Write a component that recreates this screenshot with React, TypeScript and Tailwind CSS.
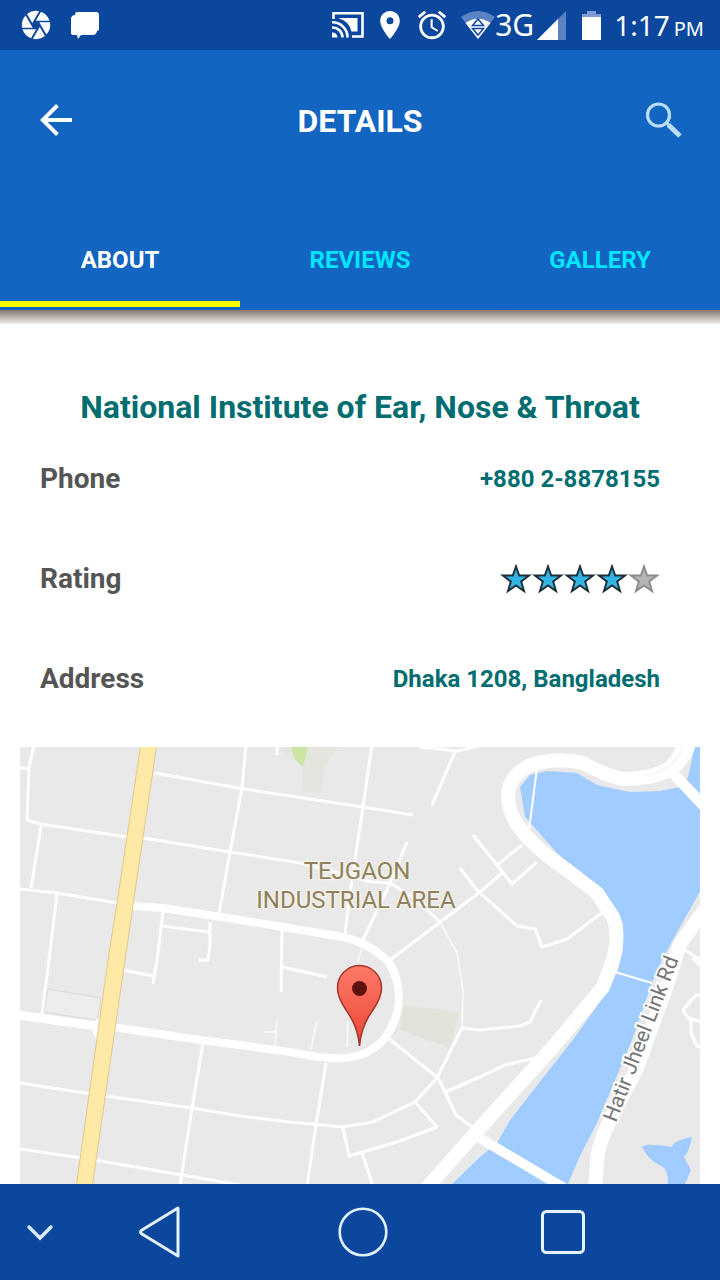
import { useState } from "react";
import { MdAlarm, MdArrowBack, MdCamera } from "react-icons/md";

const TABS = ["ABOUT", "REVIEWS", "GALLERY"];

const MINOR_ROADS = [
  "M34 745L29 767L27 820L40 824L127 837L143 838L230 852L300 863L372 882L390 883L413 897L440 922",
  "M20 768H29",
  "M41 826L31 888",
  "M20 889L57 893L117 903",
  "M57 894L49 960L42 1014",
  "M155 773L238 788L363 807L413 815",
  "M246 745L242 788L230 852L219 914",
  "M372 745L363 807L355 860L350 893L345 934",
  "M277 745V755",
  "M163 912L157 960L153 984",
  "M123 970L153 976",
  "M162 926L209 932M210 922V945L208 960H199",
  "M282 930L281 992M282 967L327 977",
  "M20 1083L105 1096L192 1108L240 1116L290 1122L343 1127L373 1122L415 1102L437 1078L462 1028L480 1030L520 1026L530 1022L541 1000",
  "M20 1149L95 1160L240 1185",
  "M203 1043L192 1108L180 1186",
  "M326 1063L316 1125L307 1186",
  "M388 1038L438 1078L445 1092L456 1115L475 1129",
  "M445 1092L480 1077L505 1065L536 1058",
  "M415 1102L437 1127L400 1141L349 1156L343 1128",
  "M362 1153L373 1186",
  "M407 842L387 890L363 940",
  "M390 960L480 892L502 873",
  "M460 868L477 890L517 926L535 929L542 947L567 939L603 912",
  "M473 835L497 865L512 884L537 862M497 865L522 845",
  "M455 752L432 805M420 747L458 751L482 745",
  "M682 948L702 961M702 995L696 995L683 1010L688 1018L702 1022M691 1020V1033L697 1046L702 1047",
];

const FAINT_ROADS = [
  "M440 922L457 953L463 990L462 1028",
  "M277 1020L275 1047M263 1032H277",
  "M317 1021L311 1050",
  "M348 1021L347 1047",
  "M362 947L358 962",
];

function StreetMap() {
  return (
    <svg
      viewBox="20 747 680 437"
      preserveAspectRatio="xMidYMin slice"
      className="block min-h-[437px] w-full flex-1"
      role="img"
      aria-label="Map of Tejgaon Industrial Area"
    >
      <defs>
        <linearGradient id="pin" x1="0" y1="0" x2="0" y2="1">
          <stop offset="0" stopColor="#ff7a68" />
          <stop offset="1" stopColor="#ea4535" />
        </linearGradient>
      </defs>
      <rect x="20" y="747" width="680" height="900" fill="#e9e9e9" />

      <path d="M278 747H338L325 765L322 792H303L302 767L290 757Z" fill="#e4e5de" />
      <path d="M291 747H308L303 767L295 759Z" fill="#cbe6a3" />
      <path d="M403 1005L460 1012L450 1048L400 1030Z" fill="#e3e3dc" />
      <path d="M48 989L101 998L98 1017L95 1020L44 1012Z" fill="#ededed" stroke="#dadada" />

      <g fill="#a1ccff">
        <path d="M520 787L530 775L547 771L577 773L597 785L630 792L660 791L680 787L688 777L695 745H702V888L680 927L662 960L652 983L632 1040L597 1123L580 1156L567 1186H450L480 1157L497 1143L510 1120L575 1037L607 992L618 970L623 950V923L603 893L557 853L525 817Z" />
        <path d="M642 1147C648 1143 654 1146 660 1145L672 1147Q674 1140 692 1137Q690 1150 684 1157L691 1170L684 1186H668Q668 1170 663 1167Q648 1160 642 1147Z" />
      </g>

      <g fill="none" stroke="#fff" strokeLinejoin="round">
        <g strokeWidth="2">
          <path d="M537 768L529 830M615 972L652 983" />
          {FAINT_ROADS.map((d) => (
            <path key={d} d={d} opacity="0.65" />
          ))}
        </g>
        <g strokeWidth="3">
          {MINOR_ROADS.map((d) => (
            <path key={d} d={d} />
          ))}
        </g>
        <g strokeWidth="9">
          <path
            d="M132 906L163 908L240 920L283 927L343 937Q367 942 387 960Q399 976 399 998Q399 1018 385 1038Q370 1056 345 1058Q330 1060 290 1052L240 1045L200 1040L112 1027"
            strokeWidth="8"
          />
          <path d="M18 1015L53 1020L105 1027" />
          <path d="M478 1137L564 1188" strokeWidth="10" />
          <path d="M668 768L704 806" strokeWidth="11" />
        </g>
        <path
          d="M686 741Q680 760 667 770Q650 779 623 779Q606 776 583 763Q560 757 533 764Q508 775 508 797Q508 819 533 843Q545 855 567 870L597 893L613 917Q620 935 613 960L603 987L553 1047L487 1120L425 1190"
          strokeWidth="14"
        />
        <path d="M692 742Q686 764 668 773Q652 783 618 780" strokeWidth="9" />
        <path d="M706 908L680 944L667 985L637 1068L610 1120Q598 1145 597 1160L595 1190" strokeWidth="14" />
      </g>
      <path d="M683 747Q679 760 669 766Q660 773 646 776M677 755L673 764" fill="none" stroke="#f1eeee" />
      <path d="M90 1026L97 1041L103 1014L96 1020Z" fill="#fff" />
      <path d="M141 743L117 903L108 960L76 1188H92L125 960L133 905L157 743Z" fill="#ffe9a6" stroke="#dfc98a" />
      <path d="M690 958L702 969V958Z" fill="#fff" />

      <g
        fill="#8f825c"
        stroke="#f3f1ea"
        strokeWidth="3"
        paintOrder="stroke"
        textAnchor="middle"
        className="font-['Roboto',sans-serif] text-[24px]"
      >
        <text x="357" y="879">TEJGAON</text>
        <text x="356" y="908">INDUSTRIAL AREA</text>
      </g>
      <text
        transform="translate(616 1123) rotate(-69)"
        fill="#757575"
        stroke="#fff"
        strokeWidth="4"
        paintOrder="stroke"
        className="font-['Roboto',sans-serif] text-[21px]"
      >
        Hatir Jheel Link Rd
      </text>

      <path
        d="M359.500 1046C358.500 1035 355 1024 350 1016C344 1007 337.500 998 337.500 987.500A22 22 0 0 1 381.500 987.500C381.500 998 375 1007 369 1016C364 1024 360.500 1035 359.500 1046Z"
        fill="url(#pin)"
        stroke="#a5352a"
        strokeWidth="1.500"
      />
      <circle cx="359.500" cy="988.500" r="7.500" fill="#5c110c" />
    </svg>
  );
}

function StatusBar() {
  return (
    <div className="flex h-[50px] items-center bg-[#0b479d] pr-4 pl-[19px] font-['Noto_Sans',sans-serif] font-normal text-white">
      <MdCamera size={34} />
      <svg width="28" height="28" viewBox="0 0 28 28" className="ml-[18px]" fill="#fff" aria-hidden="true">
        <path d="M6 1H25Q28 1 28 4V18Q28 20 26 20Q25 24 22 24H10L7 28L6 24H3Q0 24 0 22V7Q1 4 4 4Q4 1 6 1Z" />
      </svg>
      <div className="ml-auto flex items-center">
        <svg width="32" height="28" viewBox="0 0 32 28" fill="none" stroke="#fff" strokeWidth="2.600" aria-hidden="true">
          <path d="M1.500 8V2.300H30.500V25.500H20" />
          <path d="M7 7H25.500V20.500H19.500Q17 10 7 7.500Z" fill="#fff" stroke="none" />
          <path d="M0 11.300A15 15 0 0 1 15.500 26.500M0 16.500A10 10 0 0 1 10.500 26.500" />
          <path d="M0 21.500A5 5 0 0 1 5.500 26.500H0Z" fill="#fff" stroke="none" />
        </svg>
        <svg width="20" height="28" viewBox="5 2 14 20" className="ml-4" fill="#fff" aria-hidden="true">
          <path d="M12 2C8.130 2 5 5.130 5 9c0 5.250 7 13 7 13s7-7.750 7-13c0-3.870-3.130-7-7-7zm0 9.500a2.500 2.500 0 1 1 0-5 2.500 2.500 0 0 1 0 5z" />
        </svg>
        <MdAlarm size={34} className="ml-[15px]" />
        <svg width="34" height="28" viewBox="0 0 34 28" className="ml-3" aria-hidden="true">
          <path d="M17 28L0 6Q17 -6 34 6Z" fill="#5b82c2" />
          <path d="M17 28L4.500 12Q17 3.500 29.500 12Z" fill="#fff" />
          <path d="M11.500 14.500L17 8L22.500 14.500ZM11.500 17.500L17 24L22.500 17.500Z" fill="#fff" stroke="#0d479d" strokeWidth="1.500" />
        </svg>
        <span className="text-[30px] leading-8">3G</span>
        <svg width="29" height="29" viewBox="0 0 29 29" className="ml-[3px]" aria-hidden="true">
          <path d="M0 29L29 0V29Z" fill="#5b82c2" />
          <path d="M0 29L21 8V29Z" fill="#fff" />
        </svg>
        <svg width="19" height="29" viewBox="0 0 19 29" className="ml-4" aria-hidden="true">
          <path d="M0 3H5V0H14V3H19V7H0Z" fill="#7d9ccf" />
          <path d="M0 6H19V29H0Z" fill="#fff" />
        </svg>
        <span className="ml-[13px] text-[28px] leading-8">1:17</span>
        <span className="ml-1 pt-2 text-[20px] leading-6">PM</span>
      </div>
    </div>
  );
}

function Rating({ value }: { value: number }) {
  return (
    <div className="flex" role="img" aria-label={`${value} of 5 stars`}>
      {[1, 2, 3, 4, 5].map((n) => (
        <svg key={n} width="32" height="32" viewBox="0 0 32 32" aria-hidden="true">
          <path
            d="M16 3.500L19.200 12.600H29L21.200 18.500L24 28L16 22.400L8 28L10.800 18.500L3 12.600H12.800Z"
            fill={n <= value ? "#33b5e5" : "#b5b5b5"}
            stroke={n <= value ? "#1f3038" : "#8d8d8d"}
            strokeWidth="2"
          />
        </svg>
      ))}
    </div>
  );
}

export default function App() {
  const [tab, setTab] = useState(0);
  return (
    <div className="flex min-h-screen flex-col bg-white font-['Roboto',sans-serif] font-bold">
      <StatusBar />
      <header className="relative bg-[#1265c0] pb-[3px]">
        <div className="flex h-[140px] items-center justify-between px-8 text-white">
          <button type="button" aria-label="Back">
            <MdArrowBack size={48} />
          </button>
          <h1 className="pt-0.5 text-[32px] leading-10">DETAILS</h1>
          <button type="button" aria-label="Search">
            <svg width="48" height="48" viewBox="0 0 48 48" fill="none" stroke="#bbdefb">
              <circle cx="18.500" cy="19" r="11" strokeWidth="3.200" />
              <path d="M26 26.500L30 30" strokeWidth="3" />
              <path d="M28.500 29L40 40" strokeWidth="5" />
            </svg>
          </button>
        </div>
        <div role="tablist" className="grid grid-cols-3 pt-3">
          {TABS.map((name, i) => (
            <button
              key={name}
              type="button"
              role="tab"
              aria-selected={i === tab}
              onClick={() => setTab(i)}
              className={
                i === tab
                  ? "h-[105px] border-b-[6px] border-[#f6ff00] pt-4 text-[24px] text-white"
                  : "h-[105px] border-b-[6px] border-transparent pt-4 text-[24px] text-[#00e5ff]"
              }
            >
              {name}
            </button>
          ))}
        </div>
        <div className="absolute inset-x-0 top-full h-[14px] bg-linear-to-b from-[#84786f] to-[#efefef]" />
      </header>

      <main className="flex flex-1 flex-col px-5">
        <h2 className="pt-[77px] text-center text-[32px] leading-10 text-[#006d70]">
          National Institute of Ear, Nose &amp; Throat
        </h2>
        <dl className="pt-0.5 pr-10 pl-5 text-[24px] text-[#006d70]">
          <div className="flex h-[100px] items-center justify-between">
            <dt className="text-[28px] text-[#555555]">Phone</dt>
            <dd>+880 2-8878155</dd>
          </div>
          <div className="flex h-[100px] items-center justify-between">
            <dt className="text-[28px] text-[#555555]">Rating</dt>
            <dd>
              <Rating value={4} />
            </dd>
          </div>
          <div className="flex h-[100px] items-center justify-between">
            <dt className="text-[28px] text-[#555555]">Address</dt>
            <dd>Dhaka 1208, Bangladesh</dd>
          </div>
        </dl>
        <div className="mt-[18px] flex flex-1 flex-col font-normal">
          <StreetMap />
        </div>
      </main>

      <nav
        aria-label="System"
        className="grid h-24 grid-cols-[80fr_160fr_246fr_154fr_80fr] items-center justify-items-center bg-[#0b479d]"
      >
        <button type="button" aria-label="Hide">
          <svg width="28" height="18" viewBox="0 0 28 18" fill="none" stroke="#dcedff" strokeWidth="3.500" strokeLinecap="round">
            <path d="M3 4L14 15L25 4" />
          </svg>
        </button>
        <button type="button" aria-label="Back">
          <svg width="44" height="54" viewBox="0 0 44 54" fill="none" stroke="#e3f2ff" strokeWidth="3" strokeLinejoin="round">
            <path d="M40 3V51L4 29Q1 27 4 25Z" />
          </svg>
        </button>
        <button type="button" aria-label="Home">
          <svg width="52" height="52" viewBox="0 0 52 52" fill="none" stroke="#e3f2ff" strokeWidth="2.600">
            <circle cx="26" cy="26" r="23.300" />
          </svg>
        </button>
        <button type="button" aria-label="Recent apps">
          <svg width="46" height="46" viewBox="0 0 46 46" fill="none" stroke="#e3f2ff" strokeWidth="3">
            <rect x="2.500" y="2.500" width="41" height="41" rx="4" />
          </svg>
        </button>
      </nav>
    </div>
  );
}
